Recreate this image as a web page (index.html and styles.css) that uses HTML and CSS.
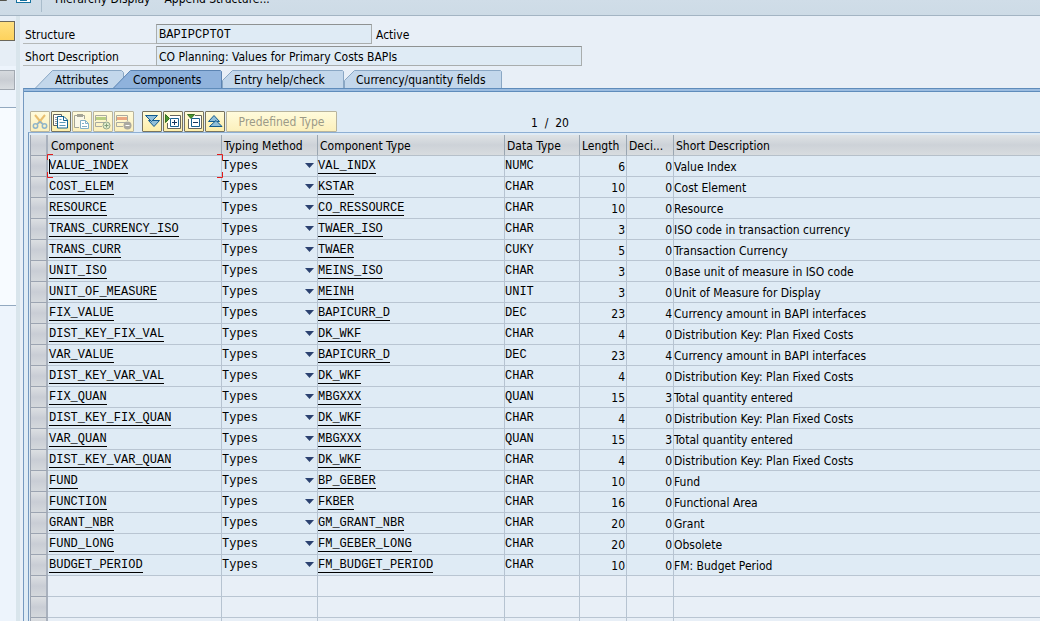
FILE: index.html
```html
<!DOCTYPE html>
<html lang="en">
<head>
<meta charset="utf-8">
<title>Structure BAPIPCPTOT</title>
<link rel="stylesheet" href="styles.css">
</head>
<body>
<header class="toolbar">
  <svg class="toolbar-icons" width="32" height="16" viewBox="0 0 32 16" aria-hidden="true">
    <path d="M0 1.500h6.500V-8" fill="none" stroke="#55544c"/>
    <rect x="16.500" y="-10.500" width="14" height="14" fill="#fff" stroke="#16729f"/>
    <path d="M20 1h7M23.500 1V-5" stroke="#16729f" stroke-width="2"/>
  </svg>
  <span class="toolbar-divider"></span>
  <button class="toolbar-button">Hierarchy Display</button>
  <button class="toolbar-button">Append Structure...</button>
</header>
<div class="workspace">
  <aside class="side">
    <div class="side-top"><button class="side-button" aria-label="Object list"></button></div>
    <div class="side-head"></div>
    <div class="side-line"></div>
    <div class="side-list"></div>
    <div class="side-rest"></div>
  </aside>
  <main class="main">
    <form class="fields">
      <div class="field">
        <label class="field-label" for="structure">Structure</label>
        <input class="field-input field-name" id="structure" value="BAPIPCPTOT" readonly>
        <span class="field-status">Active</span>
      </div>
      <div class="field">
        <label class="field-label" for="description">Short Description</label>
        <input class="field-input field-desc" id="description" value="CO Planning: Values for Primary Costs BAPIs" readonly>
      </div>
    </form>
    <nav class="tabs" role="tablist">
      <button class="tab tab-attributes" role="tab"><svg class="tab-shape" width="89" height="18" aria-hidden="true"><path d="M.5 18 17.500.5H86.500L88.500 2.500V18"/></svg><span>Attributes</span></button>
      <button class="tab tab-components" role="tab" aria-selected="true"><svg class="tab-shape" width="109" height="18" aria-hidden="true"><path d="M.5 18 17.500.5H107.500L108.500 1.500V18"/></svg><span>Components</span></button>
      <button class="tab tab-entry" role="tab"><svg class="tab-shape" width="122" height="18" aria-hidden="true"><path d="M.5 18V10.500L10.500.5H120.500L121.500 1.500V18"/></svg><span>Entry help/check</span></button>
      <button class="tab tab-currency" role="tab"><svg class="tab-shape" width="158" height="18" aria-hidden="true"><path d="M.5 18V10.500L10.500.5H156.500L157.500 1.500V18"/></svg><span>Currency/quantity fields</span></button>
    </nav>
    <section class="panel">
      <div class="actions">
        <button class="action" aria-label="Cut" disabled><svg width="18" height="19" viewBox="0 0 18 19"><g fill="none"><path d="M4 3 11 11.500M14 3 7 11.500" stroke="#e9bf70" stroke-width="2"/><circle cx="4.500" cy="14" r="2.200" stroke="#8fb5ca" stroke-width="1.500"/><circle cx="13.500" cy="14" r="2.200" stroke="#8fb5ca" stroke-width="1.500"/><path d="m9 9.500-3 3M9 9.500l3 3" stroke="#8fb5ca" stroke-width="1.500"/></g></svg></button>
        <button class="action" aria-label="Copy"><svg width="18" height="19" viewBox="0 0 18 19"><path d="M5 13.500H1.500v-11h8V4" fill="#fff" stroke="#62635e"/><path d="M3 5.500h2M3 7.500h2M3 9.500h2M3 11.500h2" stroke="#999"/><path d="M5.500 4.500h6.500l3.500 3.500v8h-10z" fill="#fff" stroke="#116391"/><path d="M11.500 4.500v4h4" fill="none" stroke="#116391"/><path d="M7.500 7.500h2M7.500 10.500h6M7.500 13.500h6" stroke="#5b9abb"/></svg></button>
        <button class="action" aria-label="Paste" disabled><svg width="18" height="19" viewBox="0 0 18 19"><path d="M6 15.500H1.500v-12h10V7" fill="#faf8e8" stroke="#a4a496"/><path d="M4 2h6v3h-6z" fill="#a4a496"/><path d="M7.500 8.500h5l3 3v5h-8z" fill="#fff" stroke="#83b0c8"/><path d="M12.500 8.500v3h3M9 11.500h2M9 14.500h5" fill="none" stroke="#83b0c8"/></svg></button>
        <button class="action" aria-label="Insert row" disabled><svg width="18" height="19" viewBox="0 0 18 19"><path d="M1 5h11v3H1z" fill="#b8cf82"/><path d="M1.500 9V3.500H12.500V9M8 14.500H1.500v-4h10" fill="none" stroke="#a9aaa1"/><circle cx="12.500" cy="13.500" r="3.500" fill="#e2edcd" stroke="#92a58a"/><path d="M10.500 13.500h4M12.500 11.500v4" stroke="#829c77"/></svg></button>
        <button class="action" aria-label="Delete row" disabled><svg width="18" height="19" viewBox="0 0 18 19"><path d="M1 5h11v3H1z" fill="#eca982"/><path d="M1.500 9V3.500H12.500V9M8 14.500H1.500v-4h10" fill="none" stroke="#a9aaa1"/><circle cx="12.500" cy="13.500" r="4" fill="#aaa9a0"/><path d="M10.500 13.500h4" stroke="#fff"/></svg></button>
        <span class="action-gap"></span>
        <button class="action" aria-label="Expand all"><svg width="18" height="19" viewBox="0 0 18 19"><g fill="#91bfd9" stroke="#125b8e"><path d="M5.500 8.500h11L11 14.500z"/><path d="M2.500 3.500h12L8.500 9.500z"/></g></svg></button>
        <button class="action" aria-label="Expand node"><svg width="18" height="19" viewBox="0 0 18 19"><path d="M6 3.500h10.500v13h-13V11" fill="#fff" stroke="#66665c"/><path d="M6.500 6.500h8v8h-8z" fill="#fff" stroke="#19618e"/><path d="M8 10.500h5M10.500 8v5" stroke="#17365f"/><path d="m1.500 2.500 4 4-4 4z" fill="#4b972e" stroke="#356f23"/></svg></button>
        <button class="action" aria-label="Collapse node"><svg width="18" height="19" viewBox="0 0 18 19"><path d="M10 3.500h6.500v13h-13V7" fill="#fff" stroke="#66665c"/><path d="M6.500 6.500h8v8h-8z" fill="#fff" stroke="#19618e"/><path d="M8 10.500h5" stroke="#17365f"/><path d="M2.500 2.500h7l-3.500 4z" fill="#4b972e" stroke="#356f23"/></svg></button>
        <button class="action" aria-label="Collapse all"><svg width="18" height="19" viewBox="0 0 18 19"><g fill="#91bfd9" stroke="#125b8e"><path d="M2.500 9.500h11L8 3.500z"/><path d="M3.500 14.500h12.500l-6-6z"/></g></svg></button>
        <button class="action action-text" disabled>Predefined Type</button>
        <output class="position">1 &nbsp;/ &nbsp;20</output>
      </div>
      <div class="grid-frame">
        <table class="grid">
          <colgroup><col class="col-select"><col class="col-component"><col class="col-method"><col class="col-type"><col class="col-data"><col class="col-number"><col class="col-number"><col></colgroup>
          <thead>
            <tr><th class="selector"></th><th>Component</th><th>Typing Method</th><th>Component Type</th><th>Data Type</th><th>Length</th><th>Deci...</th><th>Short Description</th></tr>
          </thead>
          <tbody id="rows"></tbody>
        </table>
      </div>
    </section>
  </main>
</div>
<script src="script.js"></script>
</body>
</html>
```
FILE: styles.css
```css
*, *::before { box-sizing: border-box; }
body {
  margin: 0;
  height: 100vh;
  display: flex;
  flex-direction: column;
  overflow: hidden;
  background: #e8eff7;
  color: #000;
  font: 12px/16px "DejaVu Sans Condensed", "Noto Sans", sans-serif;
}
button, input, select { font: inherit; color: inherit; margin: 0; padding: 0; border: 0; background: none; border-radius: 0; }

.toolbar {
  flex: none;
  display: flex;
  align-items: flex-end;
  height: 16px;
  overflow: hidden;
  background: linear-gradient(#d0dde8, #cddbe6);
  border-bottom: 1px solid #a3b4c3;
}
.toolbar-icons { flex: none; }
.toolbar-divider { width: 1px; height: 12px; margin: 0 13px 3px 9px; background: #a9bccb; }
.toolbar-button { height: 16px; margin-right: 14px; margin-bottom: 8px; white-space: nowrap; }

.workspace { flex: 1; min-height: 0; display: flex; }
.side { flex: none; width: 20px; display: flex; flex-direction: column; border-right: 4px solid #d9e5ec; background: #edf4fc; }
.side-top { height: 50px; padding-top: 5px; background: #e6eef6; }
.side-button { display: block; width: 15px; height: 20px; border: 1px solid #6b675a; border-left: 0; background: linear-gradient(#ffe07f, #fdd25c); }
.side-head { height: 20px; margin: 4px 1px 0 0; border: 1px solid #a2a9b1; border-left: 0; background: linear-gradient(#d6dade, #c9cdd3 50%, #d9dde0); }
.side-line { height: 18px; border-bottom: 1px solid #93a9c0; }
.side-list { height: 198px; background: #f7fbff; border-bottom: 1px solid #93a9c0; }
.side-rest { flex: 1; }

.main { flex: 1; min-width: 0; display: flex; flex-direction: column; padding: 8px 0 0 3px; }
.fields { display: grid; gap: 2px; }
.field { display: flex; height: 20px; }
.field-label { width: 133px; padding: 3px 0 0 2px; border-bottom: 1px solid #b5b8b8; }
.field-input { height: 20px; padding: 1px 2px 0; border: 1px solid #a9adad; border-top-color: #8f9292; background: #dfebf5; }
.field-name { width: 216px; font-family: "Liberation Mono", monospace; }
.field-desc { width: 426px; }
.field-status { padding: 3px 0 0 4px; }

.tabs { display: flex; padding: 4px 0 0 12px; }
.tab { position: relative; height: 18px; text-align: left; line-height: 16px; padding-top: 2px; white-space: nowrap; }
.tab span { position: relative; }
.tab-shape { position: absolute; inset: 0; fill: #c3d7eb; stroke: #8aa7c4; }
.tab-attributes { width: 89px; padding-left: 20px; }
.tab-components { width: 109px; margin-left: -11px; padding-left: 20px; z-index: 1; }
.tab-components .tab-shape { fill: #8fb2dc; stroke: #5c84b2; }
.tab-entry { width: 122px; padding-left: 12px; }
.tab-currency { width: 158px; padding-left: 12px; }

.panel {
  flex: 1;
  min-height: 0;
  display: flex;
  flex-direction: column;
  border-top: 1px solid #5f8cbb;
  border-left: 1px solid #7699c0;
  background: #dfebf5;
}
.panel::before { content: ""; height: 3px; flex: none; background: #9bbce0; border-bottom: 1px solid #5f8cbb; }
.actions { display: flex; padding: 19px 0 0 6px; }
.action {
  width: 20px;
  height: 21px;
  margin-right: 1px;
  border: 1px solid #77735f;
  border-radius: 1px;
  background: linear-gradient(#fffbd9, #fdeea9);
}
.action svg { display: block; }
.action:disabled { border-color: #b8b49d; background: linear-gradient(#fffbdc, #fcf0bc); color: #9c9a87; }
.action-gap { width: 7px; }
.action-text { width: 111px; }
.position { padding: 4px 0 0 193px; }

.grid-frame { flex: 1; min-height: 0; margin-left: 4px; padding: 2px 0 0 1px; border-top: 1px solid #8eafd3; border-left: 1px solid #7699c0; overflow: hidden; }
.grid { width: 100%; table-layout: fixed; border-collapse: separate; border-spacing: 0; }
.col-select { width: 18px; }
.col-component { width: 174px; }
.col-method { width: 96px; }
.col-type { width: 187px; }
.col-data { width: 75px; }
.col-number { width: 47px; }
.grid th, .grid td { height: 21px; padding: 0 1px 0 0; border-right: 1px solid #b6c3d1; border-bottom: 1px solid #b9c5d2; white-space: nowrap; text-align: left; font-weight: normal; }
.grid th { padding: 1px 0 0 2px; border-right-color: #9aa6b1; border-bottom-color: #b6c0ca; background: linear-gradient(#dfe3e5, #cdd2d8 50%, #d8dcdf); }
.grid th:nth-child(2) { padding-left: 3px; }
.grid td { padding-top: 1px; background: #dfebf5; }
.grid th:last-child, .grid td:last-child { border-right: 0; }
.grid .empty td { background: #e8eff7; }
.grid .selector, .grid .empty .selector { padding: 0; border-left: 1px solid #9ba3b0; border-right: 2px solid #a9b1bd; border-bottom-color: #9ca4b1; background: linear-gradient(#dcdfe2, #c9cdd5 50%, #d4d8dc); }
.grid td.mono { padding-top: 0; font-family: "Liberation Mono", monospace; }
.grid td.component { padding-left: 1px; }
.grid td.number { text-align: right; }
.link { display: inline-block; height: 16px; line-height: 16px; color: #000; text-decoration: none; border-bottom: 1px solid #000; vertical-align: top; }
.method {
  display: block;
  width: 100%;
  height: 20px;
  appearance: none;
  background: url("data:image/svg+xml,%3Csvg xmlns='http://www.w3.org/2000/svg' width='9' height='5'%3E%3Cpath d='M0 0h9L4.500 5z' fill='%232b4170'/%3E%3C/svg%3E") no-repeat right 2px top 7px;
}
.grid td.current { position: relative; }
.focus { position: absolute; left: -1px; top: -2px; width: 176px; height: 24px; fill: none; stroke: #e21b1b; pointer-events: none; }
```
FILE: script.js
```js
const rows = [
  ["VALUE_INDEX", "VAL_INDX", "NUMC", 6, 0, "Value Index"],
  ["COST_ELEM", "KSTAR", "CHAR", 10, 0, "Cost Element"],
  ["RESOURCE", "CO_RESSOURCE", "CHAR", 10, 0, "Resource"],
  ["TRANS_CURRENCY_ISO", "TWAER_ISO", "CHAR", 3, 0, "ISO code in transaction currency"],
  ["TRANS_CURR", "TWAER", "CUKY", 5, 0, "Transaction Currency"],
  ["UNIT_ISO", "MEINS_ISO", "CHAR", 3, 0, "Base unit of measure in ISO code"],
  ["UNIT_OF_MEASURE", "MEINH", "UNIT", 3, 0, "Unit of Measure for Display"],
  ["FIX_VALUE", "BAPICURR_D", "DEC", 23, 4, "Currency amount in BAPI interfaces"],
  ["DIST_KEY_FIX_VAL", "DK_WKF", "CHAR", 4, 0, "Distribution Key: Plan Fixed Costs"],
  ["VAR_VALUE", "BAPICURR_D", "DEC", 23, 4, "Currency amount in BAPI interfaces"],
  ["DIST_KEY_VAR_VAL", "DK_WKF", "CHAR", 4, 0, "Distribution Key: Plan Fixed Costs"],
  ["FIX_QUAN", "MBGXXX", "QUAN", 15, 3, "Total quantity entered"],
  ["DIST_KEY_FIX_QUAN", "DK_WKF", "CHAR", 4, 0, "Distribution Key: Plan Fixed Costs"],
  ["VAR_QUAN", "MBGXXX", "QUAN", 15, 3, "Total quantity entered"],
  ["DIST_KEY_VAR_QUAN", "DK_WKF", "CHAR", 4, 0, "Distribution Key: Plan Fixed Costs"],
  ["FUND", "BP_GEBER", "CHAR", 10, 0, "Fund"],
  ["FUNCTION", "FKBER", "CHAR", 16, 0, "Functional Area"],
  ["GRANT_NBR", "GM_GRANT_NBR", "CHAR", 20, 0, "Grant"],
  ["FUND_LONG", "FM_GEBER_LONG", "CHAR", 20, 0, "Obsolete"],
  ["BUDGET_PERIOD", "FM_BUDGET_PERIOD", "CHAR", 10, 0, "FM: Budget Period"]
];

const focusFrame = `<svg class="focus" viewBox="0 0 176 24" aria-hidden="true"><path d="M6 .5H.5V6M170 .5h5.500V6M.5 18v5.500H6M175.500 18v5.500H170"/><path d="M2.500 5v14" stroke="#000"/></svg>`;

const body = document.getElementById("rows");
body.innerHTML = rows.map(([name, type, data, length, decimals, text], i) => `
  <tr>
    <td class="selector"></td>
    <td class="mono component${i === 0 ? " current" : ""}"><a class="link" href="#">${name}</a>${i === 0 ? focusFrame : ""}</td>
    <td class="mono"><select class="method" aria-label="Typing method of ${name}"><option>Types</option></select></td>
    <td class="mono"><a class="link" href="#">${type}</a></td>
    <td class="mono">${data}</td>
    <td class="number">${length}</td>
    <td class="number">${decimals}</td>
    <td>${text}</td>
  </tr>`).join("") +
  `<tr class="empty"><td class="selector"></td>${"<td></td>".repeat(7)}</tr>`.repeat(3);
```
